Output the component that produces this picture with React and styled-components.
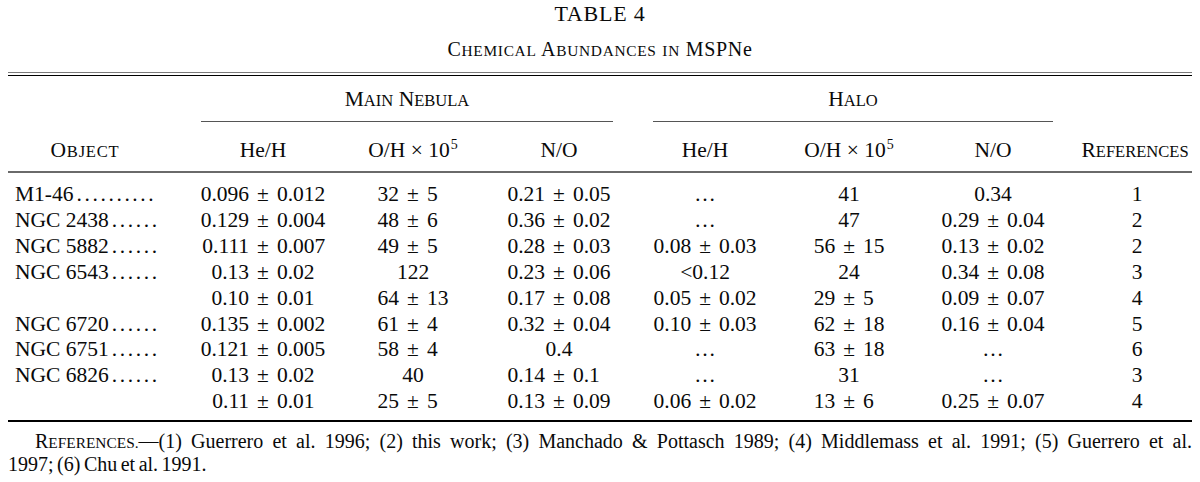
import React from 'react'
import styled, { createGlobalStyle } from 'styled-components'

const GlobalStyle = createGlobalStyle`
    body{
        margin: 0 8px;
        background: #ffffff;
        color: #0a0a0a;
        font-family: "Liberation Serif", "Times New Roman", serif;
    }
`

const rows = [
    { obj: 'M1-46', dots: 10, cells: [['0.096', '0.012'], ['32', '5'], ['0.21', '0.05'], '…', '41', '0.34'], ref: 1 },
    { obj: 'NGC 2438', dots: 6, cells: [['0.129', '0.004'], ['48', '6'], ['0.36', '0.02'], '…', '47', ['0.29', '0.04']], ref: 2 },
    { obj: 'NGC 5882', dots: 6, cells: [['0.111', '0.007'], ['49', '5'], ['0.28', '0.03'], ['0.08', '0.03'], ['56', '15'], ['0.13', '0.02']], ref: 2 },
    { obj: 'NGC 6543', dots: 6, cells: [['0.13', '0.02'], '122', ['0.23', '0.06'], '<0.12', '24', ['0.34', '0.08']], ref: 3 },
    { obj: '', dots: 0, cells: [['0.10', '0.01'], ['64', '13'], ['0.17', '0.08'], ['0.05', '0.02'], ['29', '5'], ['0.09', '0.07']], ref: 4 },
    { obj: 'NGC 6720', dots: 6, cells: [['0.135', '0.002'], ['61', '4'], ['0.32', '0.04'], ['0.10', '0.03'], ['62', '18'], ['0.16', '0.04']], ref: 5 },
    { obj: 'NGC 6751', dots: 6, cells: [['0.121', '0.005'], ['58', '4'], '0.4', '…', ['63', '18'], '…'], ref: 6 },
    { obj: 'NGC 6826', dots: 6, cells: [['0.13', '0.02'], '40', ['0.14', '0.1'], '…', '31', '…'], ref: 3 },
    { obj: '', dots: 0, cells: [['0.11', '0.01'], ['25', '5'], ['0.13', '0.09'], ['0.06', '0.02'], ['13', '6'], ['0.25', '0.07']], ref: 4 },
]

const widths = [154, 202, 98, 194, 98, 190, 98, 150]

// typeset small caps: capitals keep full size, lowercase letters become smaller capitals
function SmallCaps({ children }) {
    const parts = children.split(/([a-z.]+)/)
    return (
        <>
            {parts.map((p, i) => (/^[a-z.]+$/.test(p)
                ? <Small key={i}>{p.toUpperCase()}</Small>
                : <React.Fragment key={i}>{p}</React.Fragment>))}
        </>
    )
}

function Value({ v }) {
    if (Array.isArray(v)) {
        return (
            <Pm>
                <span className='l'>{v[0]}</span>
                <span className='s'>±</span>
                <span className='r'>{v[1]}</span>
            </Pm>
        )
    }
    return <Plain>{v}</Plain>
}

function App() {
    return (
        <Page>
            <GlobalStyle />
            <Title>TABLE 4</Title>
            <Subtitle><SmallCaps>Chemical Abundances in</SmallCaps> MSPNe</Subtitle>
            <DoubleRule />
            <Table>
                <colgroup>
                    {widths.map((w, i) => <col key={i} style={{ width: w }} />)}
                </colgroup>
                <thead>
                    <tr>
                        <SpanCell />
                        <SpanCell colSpan={3}>
                            <Spanner $ml={39} $mr={43}><SmallCaps>Main Nebula</SmallCaps></Spanner>
                        </SpanCell>
                        <SpanCell colSpan={3}>
                            <Spanner $ml={-3} $mr={-11}><SmallCaps>Halo</SmallCaps></Spanner>
                        </SpanCell>
                        <SpanCell />
                    </tr>
                    <tr>
                        <Head $spaced><SmallCaps>Object</SmallCaps></Head>
                        <Head>He/H</Head>
                        <Head>O/H × 10<Sup>5</Sup></Head>
                        <Head>N/O</Head>
                        <Head>He/H</Head>
                        <Head>O/H × 10<Sup>5</Sup></Head>
                        <Head>N/O</Head>
                        <Head $pl={36}><SmallCaps>References</SmallCaps></Head>
                    </tr>
                </thead>
                <tbody>
                    {rows.map((r, i) => (
                        <Row key={i} $first={i === 0} $last={i === rows.length - 1}>
                            <ObjCell>
                                {r.obj}
                                {r.dots > 0 && <Leader>{'.'.repeat(r.dots)}</Leader>}
                            </ObjCell>
                            {r.cells.map((c, j) => (
                                <Cell key={j}><Value v={c} /></Cell>
                            ))}
                            <Cell $pl={40}><Plain>{r.ref}</Plain></Cell>
                        </Row>
                    ))}
                </tbody>
            </Table>
            <Notes>
                <NoteLine $justify $indent={27}>
                    <SmallCaps>References.</SmallCaps>—(1) Guerrero et al. 1996; (2) this work; (3) Manchado &amp; Pottasch 1989; (4) Middlemass et al. 1991; (5) Guerrero et al.
                </NoteLine>
                <NoteLine $tight>1997; (6) Chu et al. 1991.</NoteLine>
            </Notes>
        </Page>
    )
}

const Page = styled.div`
    width: 1184px;
    padding-top: 1px;
`
const Small = styled.span`
    font-size: 0.77em;
    line-height: 1;
`
const Title = styled.div`
    text-align: center;
    font-size: 22px;
    letter-spacing: 0.8px;
    line-height: 26px;
`
const Subtitle = styled.div`
    text-align: center;
    font-size: 20px;
    line-height: 24px;
    margin-top: 10px;
    letter-spacing: 0.7px;
`
const DoubleRule = styled.div`
    margin-top: 11px;
    height: 2px;
    border-top: 1px solid #7a7a7a;
    border-bottom: 1.5px solid #000;
`
const Table = styled.table`
    width: 100%;
    border-collapse: collapse;
    table-layout: fixed;
    font-size: 21.5px;
    td, th{
        padding: 0;
        font-weight: 400;
        white-space: nowrap;
    }
`
const SpanCell = styled.th`
    padding-top: 12px !important;
    vertical-align: top;
`
const Spanner = styled.div`
    margin: 0 ${p => p.$mr}px 0 ${p => p.$ml}px;
    line-height: 22px;
    padding-bottom: 11px;
    border-bottom: 1.5px solid #555;
    text-align: center;
`
const Head = styled.th`
    text-align: center;
    padding: 16px 0 9px ${p => p.$pl || 0}px !important;
    line-height: 24px;
    border-bottom: 2px solid #6a6a6a;
    letter-spacing: ${p => (p.$spaced ? '0.8px' : '0')};
`
const Sup = styled.sup`
    font-size: 14px;
    vertical-align: 8px;
    line-height: 0;
    margin-left: 1px;
`
const Row = styled.tr`
    line-height: 25.9px;
    td{
        padding-top: ${p => (p.$first ? 9 : 0)}px;
        padding-bottom: ${p => (p.$last ? 5 : 0)}px;
        border-bottom: ${p => (p.$last ? '2.5px solid #000' : 'none')};
    }
`
const ObjCell = styled.td`
    padding-left: 7px !important;
    text-align: left;
`
const Leader = styled.span`
    margin-left: 3px;
    letter-spacing: 2.6px;
`
const Cell = styled.td`
    text-align: center;
    padding-left: ${p => p.$pl || 0}px !important;
`
const Pm = styled.div`
    display: grid;
    grid-template-columns: minmax(0, 1fr) auto minmax(0, 1fr);
    column-gap: 8px;
    .l{
        justify-self: end;
    }
    .r{
        justify-self: start;
    }
`
const Plain = styled.div`
    text-align: center;
`
const Notes = styled.div`
    padding-top: 8px;
    font-size: 20px;
    line-height: 23px;
`
const NoteLine = styled.div`
    text-indent: ${p => p.$indent || 0}px;
    text-align: ${p => (p.$justify ? 'justify' : 'left')};
    text-align-last: ${p => (p.$justify ? 'justify' : 'left')};
    white-space: nowrap;
    word-spacing: ${p => (p.$tight ? '-1.5px' : 'normal')};
`

export default App
